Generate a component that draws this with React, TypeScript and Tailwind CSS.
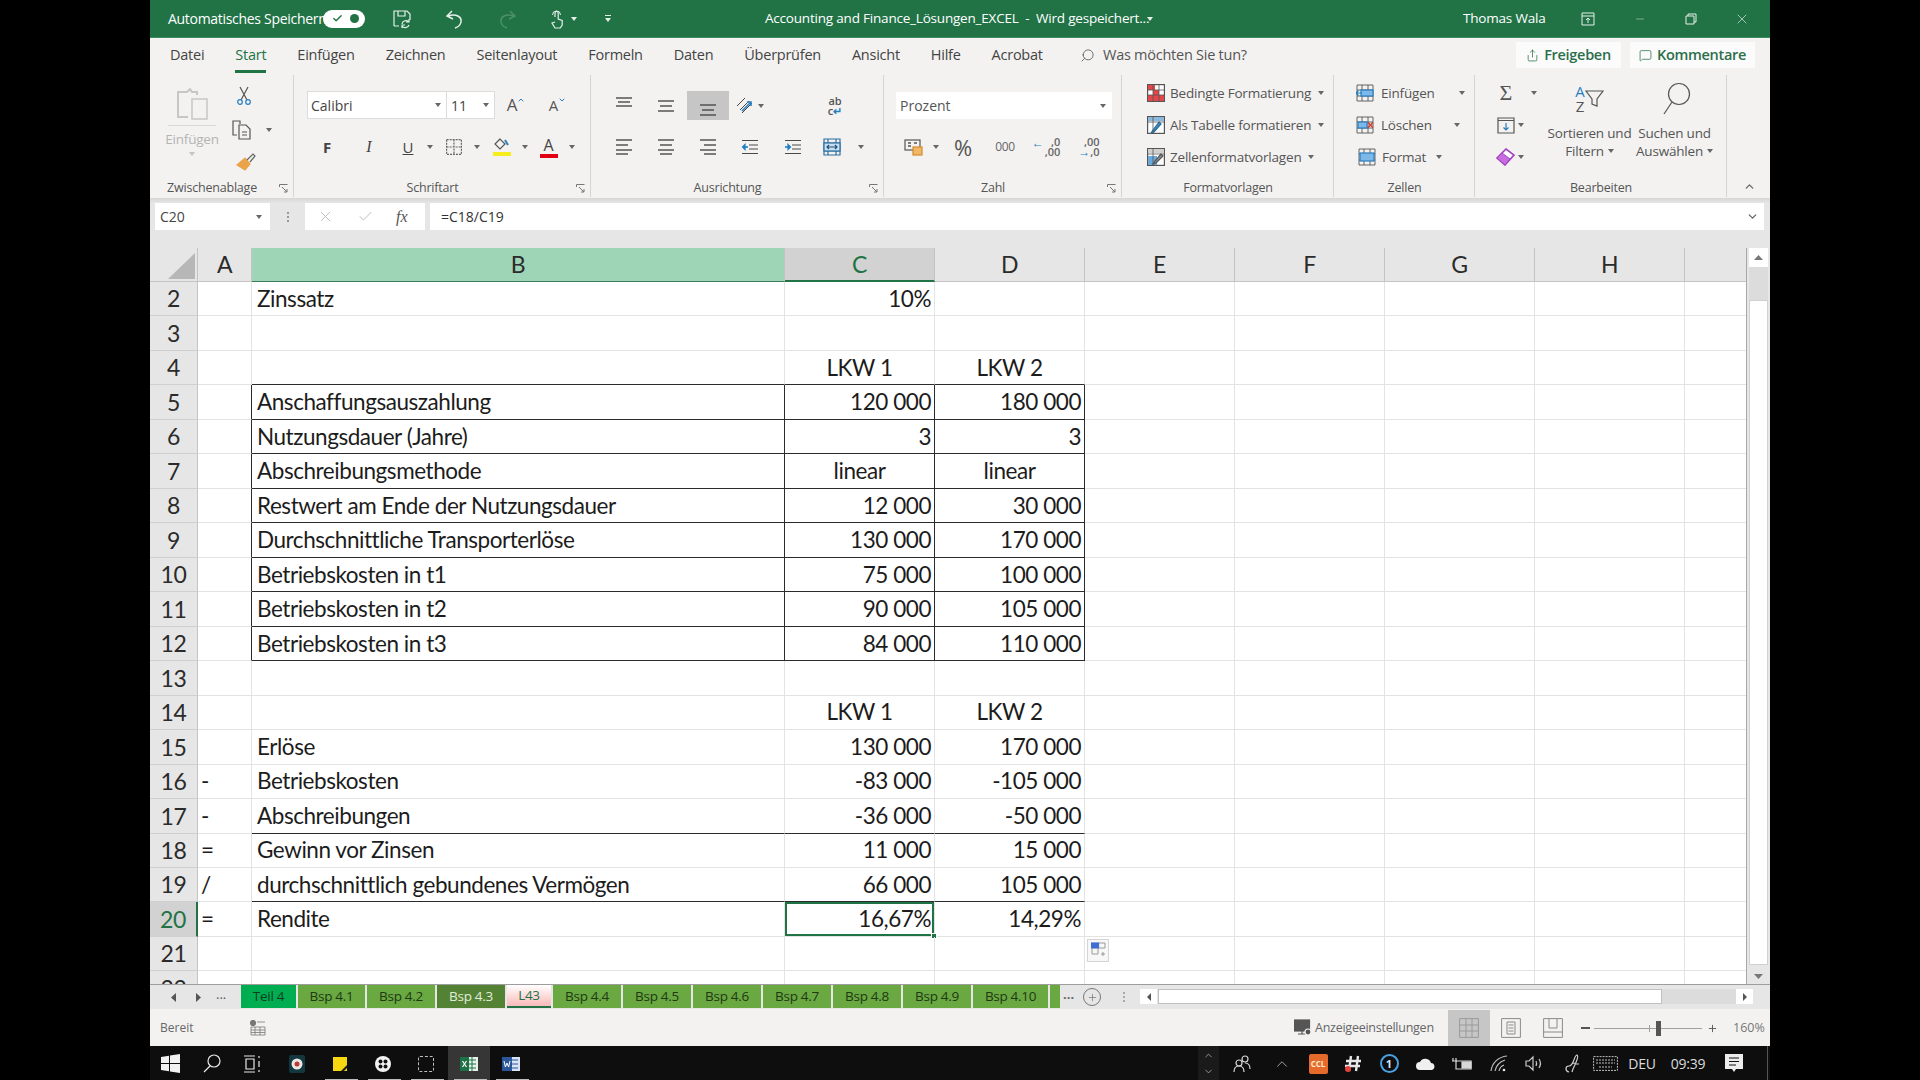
import React from "react";
import clsx from "clsx";
import { Search, Plus, MessageSquare, Share, ChevronUp, ChevronDown, X, Check, Minus } from "lucide-react";

type SvgProps = { w: number; h: number; stroke?: string; className?: string; children: React.ReactNode };

const Svg = ({ w, h, stroke = "#555", className, children }: SvgProps) => (
  <svg width={w} height={h} viewBox={`0 0 ${w} ${h}`} fill="none" stroke={stroke} strokeWidth={1.2} className={clsx("shrink-0", className)}>
    {children}
  </svg>
);

const Caret = ({ color = "#666" }: { color?: string }) => (
  <svg width="6" height="4" viewBox="0 0 6 4" className="shrink-0">
    <path d="M0 0h6L3 4z" fill={color} />
  </svg>
);

const Tool = ({ className, children }: { className: string; children?: React.ReactNode }) => (
  <div className={clsx("flex h-full shrink-0 items-center justify-center", className)}>{children}</div>
);

/* ribbon icons */
const Lines = ({ rows, widths, offset = 0 }: { rows: number[]; widths: [number, number][]; offset?: number }) => (
  <Svg w={18} h={18 + offset} stroke="#4a4a4a">
    {rows.map((y, i) => (
      <path key={y} d={`M${widths[i][0]} ${y + offset}H${widths[i][1]}`} strokeWidth={1.4} />
    ))}
  </Svg>
);

const IndentIcon = ({ inc }: { inc?: boolean }) => (
  <Svg w={18} h={18} stroke="#4a4a4a">
    <path d="M1 2.5h16M8 7h9M8 11h9M1 15.5h16" />
    <path d={inc ? "M1 9h4" : "M3 9h4"} stroke="#1f7fc0" strokeWidth={1.6} />
    <path d={inc ? "M4 6.5 6.5 9 4 11.5z" : "M4 6.5 1.5 9 4 11.5z"} fill="#1f7fc0" stroke="#1f7fc0" />
  </Svg>
);

const TableIcon = ({ kind }: { kind: "cond" | "table" | "style" }) => (
  <Svg w={18} h={18} stroke="#555">
    <rect x="0.6" y="0.6" width="16.8" height="16.8" fill="#fff" />
    {kind === "cond" && (
      <>
        <rect x="1" y="1" width="7" height="5" fill="#e2474a" stroke="none" />
        <rect x="6" y="6" width="6" height="5" fill="#e2474a" stroke="none" />
        <rect x="1" y="11" width="16" height="6" fill="#e2474a" stroke="none" />
      </>
    )}
    {kind === "table" && (
      <>
        <rect x="1" y="1" width="16" height="4" fill="#8cb8dc" stroke="none" />
        <path d="M12 6 6 14l-2 3 3-1 7-8z" fill="#3a8bc7" stroke="#2a6d9e" />
      </>
    )}
    {kind === "style" && (
      <>
        <rect x="1" y="1" width="16" height="4" fill="#cfcfcf" stroke="none" />
        <rect x="1" y="8" width="9" height="9" fill="#6aaadb" stroke="none" />
        <path d="M14 6 8 13l-2 3 3-1 7-7z" fill="#8f8f8f" stroke="#555" />
      </>
    )}
    {kind !== "cond" && <path d="M0.6 6h16.8M6 0.6v16.8" strokeWidth={0.8} />}
    {kind === "cond" && <path d="M0.6 6h16.8M0.6 11h16.8M6 0.6v16.8M12 0.6v16.8" strokeWidth={0.8} />}
  </Svg>
);

const CellIcon = ({ kind }: { kind: "ins" | "del" | "fmt" }) => (
  <Svg w={18} h={18} stroke="#555">
    <path d="M1 1h16v16H1zM1 6h16M1 12h16M6 1v16M12 1v16" strokeWidth={0.9} />
    {kind === "ins" && (
      <>
        <rect x="5" y="6" width="12" height="6" fill="#7db9e8" stroke="#2a7fc0" />
        <path d="M0 9h6M2.5 6.5 0 9l2.5 2.5" stroke="#1f7fc0" />
      </>
    )}
    {kind === "del" && (
      <>
        <rect x="2" y="6" width="9" height="6" fill="#7db9e8" stroke="#2a7fc0" />
        <path d="M12 6.5l5 5M17 6.5l-5 5" stroke="#d63b2f" strokeWidth={1.5} />
      </>
    )}
    {kind === "fmt" && <rect x="2" y="5" width="14" height="8" fill="#7db9e8" stroke="#2a7fc0" />}
  </Svg>
);

const ActionLabel = ({ children, caret }: { children: React.ReactNode; caret?: string }) => (
  <>
    <span className="whitespace-nowrap text-[13.5px] tracking-[-0.2px] text-[#555]">{children}</span>
    {caret && (
      <span className={clsx("flex", caret)}>
        <Caret />
      </span>
    )}
  </>
);

const Launcher = () => (
  <svg width="9" height="9" viewBox="0 0 9 9" fill="none" stroke="#777" className="absolute right-[6px] top-[6px]">
    <path d="M0.5 3V0.5H8.5M3 3l5 5M8 5v3H5" />
  </svg>
);

const Group = ({ width, label, launcher, children }: { width: string; label: string; launcher?: boolean; children: React.ReactNode }) => (
  <div className={clsx("relative flex h-[126px] shrink-0 flex-col", width)}>
    <div className="h-[106px] w-full">{children}</div>
    <div className={clsx("relative flex h-[20px] items-center", launcher && "w-full")}>
      <span className={clsx("w-full text-center text-[12.5px] tracking-[-0.2px] text-[#555]", launcher && "pr-[20px]")}>{label}</span>
      {launcher && <Launcher />}
    </div>
    <div className="absolute bottom-[1px] right-0 top-[3px] w-px bg-[#d4d4d4]" />
  </div>
);

const tabs = ["Datei", "Start", "Einfügen", "Zeichnen", "Seitenlayout", "Formeln", "Daten", "Überprüfen", "Ansicht", "Hilfe", "Acrobat"];

const TitleBar = () => (
  <div className="flex h-[38px] shrink-0 items-center border-b border-[#3f8a60] bg-[#217346] text-white">
    <span className="ml-[18px] w-[155px] whitespace-nowrap text-[14px] tracking-[-0.3px]">Automatisches Speichern</span>
    <div className="flex h-[18px] w-[42px] items-center justify-between rounded-full bg-white pl-[9px] pr-[6px]">
      <Check size={11} strokeWidth={3} color="#217346" />
      <span className="size-[9px] rounded-full bg-[#217346]" />
    </div>
    <Svg w={20} h={20} stroke="#e6f0ea" className="ml-[27px]">
      <path d="M2 17V2h13l3 3v6M2 17h5M6 2v5h7V2" />
      <path d="M10 15a4 4 0 0 1 7-2M17 16a4 4 0 0 1-7 1M17 10v3h-3M10 19v-3h3" />
    </Svg>
    <Svg w={20} h={20} stroke="#e6f0ea" className="ml-[33px]">
      <path d="M7 2 2 7l6 3M3 7c8-3 14 1 13 6-.5 3-3 5-6 6" strokeWidth={1.5} />
    </Svg>
    <Svg w={20} h={20} stroke="#4d8f6a" className="ml-[32px]">
      <path d="M13 2l5 5-6 3M17 7C9 4 3 8 4 13c.5 3 3 5 6 6" strokeWidth={1.5} />
    </Svg>
    <Svg w={16} h={20} stroke="#e6f0ea" className="ml-[32px]">
      <path d="M6 8V4a1.6 1.6 0 0 1 3.2 0v6l4 1.5V16l-2 3H6l-3-5 3-1" />
      <path d="M3.5 6a4 4 0 0 1 8 0" strokeWidth={1} />
    </Svg>
    <span className="ml-[6px]">
      <Caret color="#e6f0ea" />
    </span>
    <span className="ml-[28px] flex flex-col items-center gap-[2px]">
      <span className="h-px w-[6px] bg-[#e6f0ea]" />
      <Caret color="#e6f0ea" />
    </span>
    <span className="ml-[154px] w-[376px] whitespace-nowrap text-[13.5px] tracking-[-0.2px]">Accounting and Finance_Lösungen_EXCEL&nbsp; -&nbsp; Wird gespeichert...</span>
    <span className="ml-[6px]">
      <Caret color="#e6f0ea" />
    </span>
    <span className="ml-[310px] w-[80px] whitespace-nowrap text-[13.5px] tracking-[-0.2px]">Thomas Wala</span>
    <Svg w={14} h={14} stroke="#e6f0ea" className="ml-[38px]">
      <path d="M1 1h12v12H1zM1 4h12M7 11V6M5 8l2-2 2 2" strokeWidth={1} />
    </Svg>
    <Minus size={12} strokeWidth={1} color="#d8e8de" className="ml-[39px]" />
    <Svg w={12} h={12} stroke="#e6f0ea" className="ml-[39px]">
      <path d="M1 3h8v8H1zM3 3V1h8v8H9" strokeWidth={1} />
    </Svg>
    <X size={16} strokeWidth={1} color="#e6f0ea" className="ml-[37px]" />
  </div>
);

const TabRow = () => (
  <div className="flex h-[34px] shrink-0 items-center bg-[#f3f2f1] pl-[20px]">
    <div className="flex w-[910px] shrink-0 gap-[31px]">
      {tabs.map((tab) => (
        <span key={tab} className={clsx("relative whitespace-nowrap text-[14.5px] tracking-[-0.25px]", tab === "Start" ? "text-[#217346]" : "text-[#444]")}>
          {tab}
          {tab === "Start" && <span className="absolute -bottom-[7px] left-0 right-0 h-[3px] bg-[#217346]" />}
        </span>
      ))}
    </div>
    <Search size={15} strokeWidth={1.3} color="#555" className="-scale-x-100" />
    <span className="ml-[8px] w-[413px] whitespace-nowrap text-[14.5px] tracking-[-0.25px] text-[#555]">Was möchten Sie tun?</span>
    <div className="flex h-[26px] w-[105px] items-center justify-center gap-[5px] bg-[#fbfbfb] text-[14.5px] font-semibold tracking-[-0.3px] text-[#2b6f4a]">
      <Share size={13} strokeWidth={1.4} />
      Freigeben
    </div>
    <div className="ml-[9px] flex h-[26px] w-[125px] items-center justify-center gap-[5px] bg-[#fbfbfb] text-[14.5px] font-semibold tracking-[-0.3px] text-[#2b6f4a]">
      <MessageSquare size={13} strokeWidth={1.4} />
      Kommentare
    </div>
  </div>
);

const Ribbon = () => (
  <div className="flex h-[126px] shrink-0 bg-[#f3f2f1]">
    <Group width="w-[144px]" label="Zwischenablage" launcher>
      <div className="flex h-full">
        <div className="ml-[16px] flex w-[52px] flex-col items-center pt-[14px]">
          <Svg w={34} h={34} stroke="#c6c6c6">
            <path d="M22 9V6h-5l-2-3-3 3H3v25h10" strokeWidth={2} />
            <rect x="17" y="13" width="15" height="20" fill="#f3f2f1" strokeWidth={1.5} />
          </Svg>
          <span className="mt-[5px] h-px w-[48px] bg-[#d8d8d8]" />
          <span className="mt-[3px] text-[13.5px] tracking-[-0.2px] text-[#b4b4b4]">Einfügen</span>
          <span className="mt-[3px]">
            <Caret color="#c4c4c4" />
          </span>
        </div>
        <div className="ml-[15px] flex flex-col pt-[12px]">
          <div className="flex h-[24px] w-[22px] items-center justify-center">
            <Svg w={14} h={20}>
              <path d="M3 1l7 13M11 1 4 14" strokeWidth={1.2} />
              <circle cx="3" cy="16" r="2.3" stroke="#2a7fc0" />
              <circle cx="11" cy="16" r="2.3" stroke="#2a7fc0" />
            </Svg>
          </div>
          <div className="mt-[10px] flex h-[24px] items-center">
            <Svg w={20} h={20} className="ml-[-1px]">
              <path d="M8 4V1H1v14h4" />
              <path d="M7 5h7l4 4v10H7zM10 12h5M10 15h5" />
            </Svg>
            <span className="ml-[14px]">
              <Caret />
            </span>
          </div>
          <div className="mt-[8px] flex h-[24px] w-[26px] items-center justify-center">
            <Svg w={20} h={18}>
              <path d="M1 12l8-7 5 6-5 6z" fill="#eba34a" stroke="#eba34a" />
              <path d="M11 7l6-6 2 2-5 6" stroke="#666" />
            </Svg>
          </div>
        </div>
      </div>
    </Group>

    <Group width="w-[297px]" label="Schriftart" launcher>
      <div className="ml-[13px] mt-[19px] flex h-[28px]">
        <div className="flex w-[140px] items-center justify-between border border-[#dcdcdc] bg-white pl-[3px] pr-[5px] text-[14px] text-[#444]">
          Calibri
          <Caret />
        </div>
        <div className="flex w-[48px] items-center justify-between border border-l-0 border-[#dcdcdc] bg-white pl-[4px] pr-[5px] text-[14px] text-[#444]">
          11
          <Caret />
        </div>
        <Tool className="w-[42px]">
          <span className="text-[17px] text-[#555]">A</span>
          <ChevronUp size={8} strokeWidth={3} color="#2a7fc0" className="mb-[10px]" />
        </Tool>
        <Tool className="w-[41px]">
          <span className="text-[15px] text-[#555]">A</span>
          <ChevronDown size={8} strokeWidth={3} color="#2a7fc0" className="mb-[10px]" />
        </Tool>
      </div>
      <div className="ml-[13px] mt-[14px] flex h-[28px]">
        <Tool className="w-[40px] text-[15px] font-bold text-[#444]">F</Tool>
        <Tool className="w-[44px] font-['Liberation_Serif',serif] text-[16px] italic text-[#444]">I</Tool>
        <Tool className="w-[34px] text-[15px] text-[#444] underline">U</Tool>
        <Tool className="w-[10px]">
          <Caret />
        </Tool>
        <Tool className="w-[37px]">
          <Svg w={16} h={16} stroke="#666">
            <path d="M.6.6h14.8v14.8H.6zM8 .6v14.8M.6 8h14.8" strokeDasharray="2 1" />
          </Svg>
        </Tool>
        <Tool className="w-[10px]">
          <Caret />
        </Tool>
        <Tool className="w-[40px] flex-col">
          <Svg w={18} h={13}>
            <path d="M7 1 2 6l5 5 5-5z" />
            <path d="M12 2l3 5" stroke="#2a7fc0" strokeWidth={2} />
          </Svg>
          <span className="mt-[1px] h-[4px] w-[18px] bg-[#f5ee1c]" />
        </Tool>
        <Tool className="w-[6px]">
          <Caret />
        </Tool>
        <Tool className="w-[41px] flex-col text-[16px] leading-[17px] text-[#444]">
          A<span className="h-[4px] w-[18px] bg-[#e1000f]" />
        </Tool>
        <Tool className="w-[6px]">
          <Caret />
        </Tool>
      </div>
    </Group>

    <Group width="w-[293px]" label="Ausrichtung" launcher>
      <div className="ml-[12px] mt-[19px] flex h-[29px]">
        <Tool className="w-[42px] pb-[4px]">
          <Lines rows={[3, 7, 11]} widths={[[1, 17], [3, 15], [1, 17]]} />
        </Tool>
        <Tool className="w-[42px]">
          <Lines rows={[4, 9, 14]} widths={[[1, 17], [3, 15], [1, 17]]} />
        </Tool>
        <Tool className="w-[42px] bg-[#c6c6c6] pt-[4px]">
          <Lines rows={[6, 11, 16]} widths={[[1, 17], [3, 15], [1, 17]]} />
        </Tool>
        <Tool className="w-[42px] gap-[3px]">
          <Svg w={19} h={18}>
            <path d="M1 9 9 1M4 13l9-9M6 16 16 6" stroke="#444" strokeWidth={1} />
            <path d="M6 14 14 6M11 5h4v4" stroke="#2a7fc0" strokeWidth={1.6} />
          </Svg>
          <Caret />
        </Tool>
        <Tool className="ml-[43px] w-[42px]">
          <span className="text-center text-[11px] font-semibold leading-[10px] text-[#555]">
            ab
            <br />
            c<span className="text-[#2a7fc0]">↵</span>
          </span>
        </Tool>
      </div>
      <div className="ml-[12px] mt-[13px] flex h-[28px]">
        <Tool className="w-[42px]">
          <Lines rows={[2, 7, 12, 16]} widths={[[1, 17], [1, 13], [1, 17], [1, 13]]} />
        </Tool>
        <Tool className="w-[42px]">
          <Lines rows={[2, 7, 12, 16]} widths={[[1, 17], [3, 15], [1, 17], [3, 15]]} />
        </Tool>
        <Tool className="w-[42px]">
          <Lines rows={[2, 7, 12, 16]} widths={[[1, 17], [5, 17], [1, 17], [5, 17]]} />
        </Tool>
        <Tool className="w-[42px]">
          <IndentIcon />
        </Tool>
        <Tool className="w-[43px]">
          <IndentIcon inc />
        </Tool>
        <Tool className="w-[36px]">
          <Svg w={18} h={18} stroke="#2f6f9e">
            <path d="M1 1h16v16H1zM1 5h16M1 13h16M5 1v4M13 1v4M5 13v4M13 13v4" />
            <rect x="1" y="5" width="16" height="8" fill="#c5e0f5" />
            <path d="M4 9h10M6 7 4 9l2 2M12 7l2 2-2 2" stroke="#234f73" />
          </Svg>
        </Tool>
        <Tool className="w-[16px] pl-[6px]">
          <Caret />
        </Tool>
      </div>
    </Group>

    <Group width="w-[238px]" label="Zahl" launcher>
      <div className="ml-[12px] mt-[20px] flex h-[27px] w-[216px] items-center justify-between bg-white pl-[4px] pr-[6px] text-[14px] text-[#555]">
        Prozent
        <Caret />
      </div>
      <div className="ml-[12px] mt-[14px] flex h-[28px]">
        <Tool className="w-[36px]">
          <Svg w={20} h={18}>
            <rect x="1" y="2" width="15" height="10" />
            <path d="M4 5h3M4 8h3M10 5h3" strokeWidth={1.3} />
            <rect x="9" y="9" width="9" height="8" fill="#f2b766" stroke="#d58a2c" />
          </Svg>
        </Tool>
        <Tool className="w-[8px]">
          <Caret />
        </Tool>
        <Tool className="w-[46px] text-[22px] leading-none text-[#555]">%</Tool>
        <Tool className="w-[38px] text-[12px] tracking-[-0.4px] text-[#666]">000</Tool>
        <Tool className="w-[44px]">
          <span className="flex items-center text-[11px] font-semibold leading-[10px] text-[#666]">
            <span className="mb-[9px] mr-px text-[12px] text-[#2a7fc0]">←</span>
            <span className="text-right">
              ,0
              <br />
              ,00
            </span>
          </span>
        </Tool>
        <Tool className="w-[42px]">
          <span className="flex items-center text-[11px] font-semibold leading-[10px] text-[#666]">
            <span className="text-right">
              ,00
              <br />
              <span className="text-[12px] text-[#2a7fc0]">→</span>,0
            </span>
          </span>
        </Tool>
      </div>
    </Group>

    <Group width="w-[212px]" label="Formatvorlagen">
      <div className="flex flex-col pl-[25px] pt-[5px]">
        <div className="flex h-[32px] items-center gap-[5px]">
          <TableIcon kind="cond" />
          <ActionLabel caret="ml-[2px]">Bedingte Formatierung</ActionLabel>
        </div>
        <div className="flex h-[32px] items-center gap-[5px]">
          <TableIcon kind="table" />
          <ActionLabel caret="ml-[2px]">Als Tabelle formatieren</ActionLabel>
        </div>
        <div className="flex h-[32px] items-center gap-[5px]">
          <TableIcon kind="style" />
          <ActionLabel caret="ml-[2px]">Zellenformatvorlagen</ActionLabel>
        </div>
      </div>
    </Group>

    <Group width="w-[141px]" label="Zellen">
      <div className="flex flex-col pl-[22px] pt-[5px]">
        <div className="flex h-[32px] items-center gap-[7px]">
          <CellIcon kind="ins" />
          <ActionLabel caret="ml-[17px]">Einfügen</ActionLabel>
        </div>
        <div className="flex h-[32px] items-center gap-[7px]">
          <CellIcon kind="del" />
          <ActionLabel caret="ml-[15px]">Löschen</ActionLabel>
        </div>
        <div className="ml-[2px] flex h-[32px] items-center gap-[6px]">
          <CellIcon kind="fmt" />
          <ActionLabel caret="ml-[4px]">Format</ActionLabel>
        </div>
      </div>
    </Group>

    <Group width="w-[252px]" label="Bearbeiten">
      <div className="flex h-full">
        <div className="ml-[20px] flex w-[52px] flex-col pt-[5px]">
          <div className="flex h-[32px] items-center">
            <span className="w-[22px] text-center font-['Liberation_Serif',serif] text-[22px] leading-none text-[#555]">Σ</span>
            <span className="ml-[14px]">
              <Caret />
            </span>
          </div>
          <div className="flex h-[32px] items-center">
            <Svg w={18} h={17} className="ml-[2px]">
              <path d="M1 1h16v15H1zM1 3.5h16" />
              <path d="M9 6v7M6.5 10.5 9 13l2.5-2.5" stroke="#2a7fc0" />
            </Svg>
            <span className="ml-[3px]">
              <Caret />
            </span>
          </div>
          <div className="flex h-[32px] items-center">
            <Svg w={20} h={18} stroke="#a43fc4" className="ml-[1px]">
              <path d="M1 10l9-9 8 6-9 10z" fill="#fff" strokeWidth={1.6} />
              <path d="M1 10l5-5 8 6-5 6z" fill="#c86ddd" strokeWidth={1} />
            </Svg>
            <span className="ml-[2px]">
              <Caret />
            </span>
          </div>
        </div>
        <div className="flex w-[85px] flex-col items-center">
          <div className="mt-[8px] flex h-[38px] items-center">
            <span className="flex flex-col items-center text-[15px] leading-[15px]">
              <span className="text-[#2a7fc0]">A</span>
              <span className="text-[#555]">Z</span>
            </span>
            <Svg w={19} h={20} className="mb-[2px]">
              <path d="M1 3h17l-6 8v7l-5-2v-5z" />
            </Svg>
          </div>
          <span className="mt-[6px] whitespace-nowrap text-[13.5px] leading-[18px] tracking-[-0.2px] text-[#555]">Sortieren und</span>
          <span className="flex items-center gap-[4px] text-[13.5px] leading-[18px] tracking-[-0.2px] text-[#555]">
            Filtern
            <Caret />
          </span>
        </div>
        <div className="flex w-[85px] flex-col items-center">
          <div className="mt-[8px] flex h-[38px] items-center">
            <Svg w={32} h={34}>
              <circle cx="20" cy="12" r="10.5" />
              <path d="M13 20 5 32" />
            </Svg>
          </div>
          <span className="mt-[6px] whitespace-nowrap text-[13.5px] leading-[18px] tracking-[-0.2px] text-[#555]">Suchen und</span>
          <span className="flex items-center gap-[4px] text-[13.5px] leading-[18px] tracking-[-0.2px] text-[#555]">
            Auswählen
            <Caret />
          </span>
        </div>
      </div>
    </Group>

    <div className="flex flex-1 items-end justify-end pb-[5px] pr-[14px]">
      <ChevronUp size={13} strokeWidth={2.4} color="#666" />
    </div>
  </div>
);

const FormulaBar = () => (
  <div className="flex h-[50px] shrink-0 flex-col bg-[#e6e6e6]">
    <div className="h-[5px] bg-gradient-to-b from-[#d6d6d6] to-[#e6e6e6]" />
    <div className="flex h-[27px] items-stretch pl-[5px] pr-[6px] pt-0">
      <div className="flex w-[115px] items-center justify-between bg-white pl-[5px] pr-[8px] text-[14px] text-[#444]">
        C20
        <Caret />
      </div>
      <div className="flex w-[35px] flex-col items-center justify-center gap-[2px]">
        <span className="size-[2px] bg-[#999]" />
        <span className="size-[2px] bg-[#999]" />
        <span className="size-[2px] bg-[#999]" />
      </div>
      <div className="flex w-[120px] items-center bg-white pl-[12px] pr-[8px]">
        <X size={17} strokeWidth={1.4} color="#bdbdbd" />
        <Check size={17} strokeWidth={1.4} color="#bdbdbd" className="ml-[23px]" />
        <span className="ml-[22px] font-['Liberation_Serif',serif] text-[16px] italic text-[#555]">fx</span>
      </div>
      <div className="ml-[5px] flex flex-1 items-center justify-between bg-white pl-[11px] pr-[5px] text-[14px] text-[#333]">
        =C18/C19
        <ChevronDown size={13} strokeWidth={2.4} color="#666" />
      </div>
    </div>
  </div>
);

const headTint = "border-r border-b border-[#c4c4c4]";
const HeadCell = ({ label, className }: { label: string; className: string }) => (
  <div className={clsx("flex h-full shrink-0 items-center justify-center text-[23px]", headTint, className)}>{label}</div>
);

const SheetHeader = () => (
  <div className="flex h-[34px] shrink-0 bg-[#e6e6e6] font-['Lato',sans-serif] text-[#2b2b2b]">
    <div className="relative flex h-full w-[48px] shrink-0 items-end justify-end border-b border-r border-[#c4c4c4] pb-[2px] pr-[2px]">
      <svg width="27" height="26" viewBox="0 0 27 26">
        <path d="M27 0v26H0z" fill="#b7b7b7" />
      </svg>
    </div>
    <HeadCell label="A" className="w-[54px]" />
    <HeadCell label="B" className="w-[533px] border-b-[#3f7d5b] bg-[#9fd5b7]" />
    <HeadCell label="C" className="w-[150px] border-b-2 border-b-[#217346] bg-[#d2d2d2] text-[#217346]" />
    <HeadCell label="D" className="w-[150px]" />
    <HeadCell label="E" className="w-[150px]" />
    <HeadCell label="F" className="w-[150px]" />
    <HeadCell label="G" className="w-[150px]" />
    <HeadCell label="H" className="w-[150px]" />
    <div className="flex-1 border-b border-[#c4c4c4]" />
  </div>
);

type Row = { n: number; a?: string; b?: string; c?: string; d?: string; center?: boolean; box?: boolean; line?: boolean };

const rows: Row[] = [
  { n: 2, b: "Zinssatz", c: "10%" },
  { n: 3 },
  { n: 4, c: "LKW 1", d: "LKW 2", center: true, line: true },
  { n: 5, b: "Anschaffungsauszahlung", c: "120 000", d: "180 000", box: true, line: true },
  { n: 6, b: "Nutzungsdauer (Jahre)", c: "3", d: "3", box: true, line: true },
  { n: 7, b: "Abschreibungsmethode", c: "linear", d: "linear", center: true, box: true, line: true },
  { n: 8, b: "Restwert am Ende der Nutzungsdauer", c: "12 000", d: "30 000", box: true, line: true },
  { n: 9, b: "Durchschnittliche Transporterlöse", c: "130 000", d: "170 000", box: true, line: true },
  { n: 10, b: "Betriebskosten in t1", c: "75 000", d: "100 000", box: true, line: true },
  { n: 11, b: "Betriebskosten in t2", c: "90 000", d: "105 000", box: true, line: true },
  { n: 12, b: "Betriebskosten in t3", c: "84 000", d: "110 000", box: true, line: true },
  { n: 13 },
  { n: 14, c: "LKW 1", d: "LKW 2", center: true },
  { n: 15, b: "Erlöse", c: "130 000", d: "170 000" },
  { n: 16, a: "-", b: "Betriebskosten", c: "-83 000", d: "-105 000" },
  { n: 17, a: "-", b: "Abschreibungen", c: "-36 000", d: "-50 000", line: true },
  { n: 18, a: "=", b: "Gewinn vor Zinsen", c: "11 000", d: "15 000" },
  { n: 19, a: "/", b: "durchschnittlich gebundenes Vermögen", c: "66 000", d: "105 000", line: true },
  { n: 20, a: "=", b: "Rendite", c: "16,67%", d: "14,29%" },
  { n: 21 },
  { n: 22 },
];

const cellBase = "flex h-full shrink-0 items-center whitespace-nowrap border-b border-r border-[#e3e3e3]";

const SheetRow = ({ row }: { row: Row }) => {
  const selected = row.n === 20;
  const lineCls = row.line ? "border-b-[#2b2b2b]" : "";
  const boxCls = row.box ? "border-r-[#2b2b2b]" : "";
  const numCls = row.center ? "justify-center" : "justify-end pr-[3px]";
  return (
    <div className="flex h-[34.47px] shrink-0">
      <div
        className={clsx(
          "flex h-full w-[48px] shrink-0 items-center justify-center border-b border-[#cfcfcf] text-[23px]",
          selected ? "border-r-2 border-r-[#217346] bg-[#d2d2d2] text-[#217346]" : "border-r border-r-[#c4c4c4] bg-[#e6e6e6] text-[#2b2b2b]",
        )}
      >
        {row.n}
      </div>
      <div className={clsx(cellBase, "w-[54px] pl-[3px]", boxCls)}>{row.a}</div>
      <div className={clsx(cellBase, "w-[533px] pl-[5px]", lineCls, boxCls)}>{row.b}</div>
      <div className={clsx(cellBase, "relative w-[150px]", numCls, lineCls, boxCls, selected && "shadow-[inset_0_0_0_2px_#217346]")}>
        {row.c}
        {selected && <span className="absolute -bottom-[3px] -right-[3px] size-[6px] border border-white bg-[#217346]" />}
      </div>
      <div className={clsx(cellBase, "w-[150px]", numCls, lineCls, boxCls)}>{row.d}</div>
      <div className={clsx(cellBase, "relative w-[150px]")}>
        {row.n === 21 && (
          <div className="absolute left-[2px] top-[2px] flex h-[23px] w-[22px] flex-col justify-center border border-[#d5d5d5] bg-[#f7f7f7] px-[3px]">
            <Svg w={15} h={16} stroke="#9a9a9a">
              <rect x="0.5" y="1" width="7" height="5" fill="#3f6fd1" stroke="#3f6fd1" />
              <path d="M8 1h6v5H8M1 6v6h6V6M10 12h4M12 10v4" strokeWidth={1} />
            </Svg>
          </div>
        )}
      </div>
      <div className={clsx(cellBase, "w-[150px]")} />
      <div className={clsx(cellBase, "w-[150px]")} />
      <div className={clsx(cellBase, "w-[150px]")} />
      <div className="flex-1 border-b border-[#e3e3e3]" />
    </div>
  );
};

const VScrollbar = () => (
  <div className="flex w-[23px] shrink-0 flex-col bg-[#e6e6e6] pl-[2px] pr-[2px]">
    <div className="flex h-[19px] shrink-0 items-center justify-center bg-white">
      <svg width="9" height="5" viewBox="0 0 9 5">
        <path d="M0 5h9L4.5 0z" fill="#777" />
      </svg>
    </div>
    <div className="h-[33px] shrink-0 bg-[#dcdcdc]" />
    <div className="flex-1 border border-[#d0d0d0] bg-white" />
    <div className="mt-[3px] flex h-[16px] shrink-0 items-center justify-center">
      <svg width="9" height="5" viewBox="0 0 9 5">
        <path d="M0 0h9L4.5 5z" fill="#777" />
      </svg>
    </div>
  </div>
);

const Sheet = () => (
  <div className="flex h-[736px] shrink-0 bg-[#e6e6e6]">
    <div className="flex w-[1597px] shrink-0 flex-col overflow-hidden border-r border-[#a8a8a8] bg-white font-['Lato',sans-serif] text-[22.5px] tracking-[-0.45px] text-[#1c1c1c]">
      <SheetHeader />
      {rows.map((row) => (
        <SheetRow key={row.n} row={row} />
      ))}
    </div>
    <VScrollbar />
  </div>
);

type SheetTab = { label: string; width: string; tone: "green" | "bright" | "dark" | "active" };

const sheetTabs: SheetTab[] = [
  { label: "Teil 4", width: "w-[55px]", tone: "bright" },
  { label: "Bsp 4.1", width: "w-[67px]", tone: "green" },
  { label: "Bsp 4.2", width: "w-[68px]", tone: "green" },
  { label: "Bsp 4.3", width: "w-[68px]", tone: "dark" },
  { label: "L43", width: "w-[44px]", tone: "active" },
  { label: "Bsp 4.4", width: "w-[68px]", tone: "green" },
  { label: "Bsp 4.5", width: "w-[68px]", tone: "green" },
  { label: "Bsp 4.6", width: "w-[68px]", tone: "green" },
  { label: "Bsp 4.7", width: "w-[68px]", tone: "green" },
  { label: "Bsp 4.8", width: "w-[68px]", tone: "green" },
  { label: "Bsp 4.9", width: "w-[68px]", tone: "green" },
  { label: "Bsp 4.10", width: "w-[75px]", tone: "green" },
];

const SheetTabs = () => (
  <div className="flex h-[25px] shrink-0 border-t border-[#9d9d9d] bg-[#e6e6e6]">
    <div className="flex w-[91px] shrink-0 items-center pl-[21px] text-[#555]">
      <svg width="5" height="9" viewBox="0 0 5 9">
        <path d="M5 0v9L0 4.5z" fill="#555" />
      </svg>
      <svg width="5" height="9" viewBox="0 0 5 9" className="ml-[20px]">
        <path d="M0 0v9l5-4.5z" fill="#555" />
      </svg>
      <span className="ml-[15px] pb-[4px] text-[13px]">...</span>
    </div>
    <div className="flex w-[816px] shrink-0 gap-[2px]">
      {sheetTabs.map((tab) => (
        <div
          key={tab.label}
          className={clsx(
            "flex h-[23px] shrink-0 items-center justify-center text-[13.5px] tracking-[-0.3px]",
            tab.width,
            tab.tone === "green" && "bg-[#6aa842] text-[#1d3a12]",
            tab.tone === "bright" && "bg-[#00ad50] text-[#0f3d22]",
            tab.tone === "dark" && "bg-[#548235] text-[#e2edd9]",
            tab.tone === "active" && "border-b-2 border-[#217346] bg-gradient-to-b from-white to-[#f8b9b9] text-[#217346]",
          )}
        >
          {tab.label}
        </div>
      ))}
      <div className="h-[23px] w-[10px] shrink-0 bg-[#6aa842]" />
    </div>
    <span className="ml-[6px] w-[20px] shrink-0 pb-[4px] text-[13px] font-bold text-[#666]">...</span>
    <div className="mt-[3px] flex size-[18px] shrink-0 items-center justify-center rounded-full border border-[#777]">
      <Plus size={11} strokeWidth={1.2} color="#555" />
    </div>
    <div className="ml-[15px] flex w-[16px] shrink-0 flex-col items-center justify-center gap-[2px]">
      <span className="size-[2px] bg-[#aaa]" />
      <span className="size-[2px] bg-[#aaa]" />
      <span className="size-[2px] bg-[#aaa]" />
    </div>
    <div className="ml-[8px] mt-[4px] flex h-[15px] w-[17px] shrink-0 items-center justify-center bg-white">
      <svg width="4" height="8" viewBox="0 0 4 8">
        <path d="M4 0v8L0 4z" fill="#555" />
      </svg>
    </div>
    <div className="ml-px mt-[4px] h-[15px] w-[504px] shrink-0 border border-[#c0c0c0] bg-white" />
    <div className="mt-[4px] h-[15px] w-[74px] shrink-0 bg-[#dcdcdc]" />
    <div className="mt-[4px] flex h-[15px] w-[17px] shrink-0 items-center justify-center bg-white">
      <svg width="4" height="8" viewBox="0 0 4 8">
        <path d="M0 0v8l4-4z" fill="#555" />
      </svg>
    </div>
  </div>
);

const StatusBar = () => (
  <div className="flex h-[37px] shrink-0 items-stretch border-t border-[#f2f2f2] bg-[#f3f2f1] text-[#666]">
    <span className="ml-[10px] flex w-[90px] items-center text-[12px]">Bereit</span>
    <div className="flex items-center">
      <Svg w={16} h={16} stroke="#777">
        <circle cx="3" cy="3" r="2.5" fill="#777" />
        <path d="M7 2h8M1 7h14v8H1zM1 10h14M1 12.5h14M5 7v8M10 7v8" strokeWidth={0.8} />
      </Svg>
    </div>
    <div className="ml-[1028px] flex w-[154px] items-center">
      <Svg w={18} h={18} stroke="#555">
        <rect x="0.5" y="1" width="15" height="11" fill="#555" />
        <path d="M8 12v3M4 15h8" />
        <circle cx="14" cy="13" r="3" fill="#555" stroke="#f3f2f1" />
      </Svg>
      <span className="ml-[3px] whitespace-nowrap text-[12.5px] tracking-[-0.25px]">Anzeigeeinstellungen</span>
    </div>
    <div className="flex w-[42px] items-center justify-center bg-[#c6c6c6]">
      <Svg w={20} h={20} stroke="#9a9a9a">
        <path d="M.6.6h18.8v18.8H.6zM7 .6v18.8M13 .6v18.8M.6 7h18.8M.6 13h18.8" strokeWidth={1} />
      </Svg>
    </div>
    <div className="flex w-[41px] items-center justify-center">
      <Svg w={20} h={20} stroke="#8a8a8a">
        <path d="M.6.6h18.8v18.8H.6zM6 4h8v12H6zM7.5 7h5M7.5 10h5M7.5 13h5" strokeWidth={1} />
      </Svg>
    </div>
    <div className="flex w-[44px] items-center justify-center">
      <Svg w={20} h={20} stroke="#8a8a8a">
        <path d="M.6.6h18.8v18.8H.6zM6 .6V10h8V.6M.6 14h18.8" strokeWidth={1} />
      </Svg>
    </div>
    <div className="flex w-[146px] items-center">
      <span className="ml-[6px] h-[2px] w-[9px] bg-[#555]" />
      <div className="relative ml-[4px] h-px w-[108px] bg-[#a0a0a0]">
        <span className="absolute left-[55px] top-[-3px] h-[7px] w-px bg-[#a0a0a0]" />
        <span className="absolute left-[62px] top-[-7px] h-[15px] w-[5px] bg-[#555]" />
      </div>
      <Plus size={11} strokeWidth={2} color="#555" className="ml-[5px]" />
    </div>
    <span className="flex items-center pl-[12px] text-[12.5px] text-[#777]">160%</span>
  </div>
);

const launchApps = [
  { key: "start", cell: "w-[41px]", bar: false },
  { key: "search", cell: "w-[41px]", bar: false },
  { key: "view", cell: "w-[42px]", bar: false },
  { key: "browser", cell: "ml-[2px] w-[42px]", bar: false },
  { key: "notes", cell: "ml-[1px] w-[42px]", bar: true },
  { key: "circle", cell: "ml-[1px] w-[42px]", bar: true },
  { key: "snip", cell: "ml-[1px] w-[42px]", bar: true },
  { key: "excel", cell: "ml-px w-[42px] bg-[#363636]", bar: true },
  { key: "word", cell: "w-[42px]", bar: true },
];

const AppIcon = ({ name }: { name: string }) => {
  switch (name) {
    case "start":
      return (
        <svg width="19" height="19" viewBox="0 0 19 19" fill="#f2f2f2">
          <path d="M0 3l8-1.2V9H0zM9 1.6 19 0v9H9zM0 10h8v7.2L0 16zM9 10h10v9L9 17.4z" />
        </svg>
      );
    case "search":
      return (
        <Svg w={18} h={19} stroke="#e8e8e8">
          <circle cx="11" cy="7" r="6" />
          <path d="M7 12 1 18" />
        </Svg>
      );
    case "view":
      return (
        <Svg w={18} h={18} stroke="#e8e8e8">
          <path d="M0 1h11M0 17h11M2 4h8v10H2zM15 1v2M15 6v6M15 15v2" />
        </Svg>
      );
    case "browser":
      return (
        <svg width="16" height="18" viewBox="0 0 16 18">
          <rect width="16" height="18" rx="2" fill="#12373c" />
          <circle cx="8" cy="9" r="5.5" fill="#e8e8e8" />
          <circle cx="8" cy="9" r="2.5" fill="#c0392b" />
        </svg>
      );
    case "notes":
      return (
        <svg width="14" height="14" viewBox="0 0 14 14">
          <path d="M0 0h14v14H0z" fill="#f8d90f" />
          <path d="M8 14l6-6v3l-3 3z" fill="#222" />
        </svg>
      );
    case "circle":
      return (
        <svg width="16" height="16" viewBox="0 0 16 16">
          <circle cx="8" cy="8" r="8" fill="#f2f2f2" />
          <circle cx="5.5" cy="5.5" r="2" fill="#111" />
          <circle cx="10.5" cy="5.5" r="2" fill="#111" />
          <circle cx="5.5" cy="10.5" r="2" fill="#111" />
          <circle cx="10.5" cy="10.5" r="2" fill="#111" />
        </svg>
      );
    case "snip":
      return <span className="size-[16px] rounded-[2px] border border-dashed border-[#bdbdbd]" />;
    case "excel":
      return (
        <svg width="18" height="16" viewBox="0 0 18 16">
          <path d="M6 1h12v14H6z" fill="#e6f0ea" />
          <path d="M8 4h8M8 8h8M8 12h8M12 1v14" stroke="#217346" />
          <path d="M0 1h9v14H0z" fill="#1e7145" />
          <path d="M2.5 5l4 6M6.5 5l-4 6" stroke="#fff" strokeWidth={1.2} />
        </svg>
      );
    default:
      return (
        <svg width="18" height="16" viewBox="0 0 18 16">
          <path d="M6 1h12v14H6z" fill="#d8e3f5" />
          <path d="M9 4h7M9 8h7M9 12h7" stroke="#2b579a" />
          <path d="M0 1h10v14H0z" fill="#2b579a" />
          <path d="M2 5l1.4 6L5 7l1.6 4L8 5" stroke="#fff" strokeWidth={1} fill="none" />
        </svg>
      );
  }
};

const TrayCell = ({ className, children }: { className: string; children: React.ReactNode }) => (
  <div className={clsx("flex h-full shrink-0 items-center justify-center", className)}>{children}</div>
);

const Taskbar = () => (
  <div className="flex h-[35px] shrink-0 bg-[#0e0e0e] text-[#dcdcdc]">
    {launchApps.map((app) => (
      <div key={app.key} className={clsx("relative flex h-full shrink-0 items-center justify-center", app.cell)}>
        <AppIcon name={app.key} />
        {app.bar && <span className="absolute bottom-0 left-[6px] right-[3px] h-[2px] bg-[#bdbdbd]" />}
      </div>
    ))}
    <div className="ml-[666px] flex w-[21px] shrink-0 flex-col items-center justify-center gap-[5px] bg-[#1a1a1a]">
      <ChevronUp size={11} strokeWidth={1.6} color="#bdbdbd" />
      <ChevronDown size={11} strokeWidth={1.6} color="#bdbdbd" />
    </div>
    <TrayCell className="w-[46px]">
      <Svg w={19} h={19} stroke="#d8d8d8">
        <circle cx="12" cy="5" r="3" />
        <circle cx="6" cy="9" r="3" />
        <path d="M1 18c0-4 2-6 5-6s5 2 5 6M12 9c3 0 5 2 5 6" />
      </Svg>
    </TrayCell>
    <TrayCell className="w-[34px]">
      <ChevronUp size={18} strokeWidth={1} color="#cfcfcf" />
    </TrayCell>
    <TrayCell className="w-[38px]">
      <div className="flex h-[20px] w-[19px] items-center justify-center rounded-[2px] bg-[#e56a2c] text-[8px] font-bold text-[#ffe9c9]">CCL</div>
    </TrayCell>
    <TrayCell className="w-[33px]">
      <Svg w={17} h={17} stroke="#e8e8e8">
        <path d="M6 1 4 16M13 1l-2 15M1 6h15M0 11h15" strokeWidth={2.4} />
        <circle cx="3" cy="14" r="3" fill="#e3413b" stroke="none" />
      </Svg>
    </TrayCell>
    <TrayCell className="w-[38px]">
      <div className="flex size-[19px] items-center justify-center rounded-full border-[2px] border-[#4aa3e0] text-[11px] font-bold leading-none text-[#cfe8f9]">1</div>
    </TrayCell>
    <TrayCell className="w-[35px]">
      <svg width="20" height="12" viewBox="0 0 20 12">
        <path d="M4 12a4 4 0 0 1 0-8 6 6 0 0 1 11 1 3.6 3.6 0 0 1 1 7z" fill="#f0f0f0" />
      </svg>
    </TrayCell>
    <TrayCell className="w-[38px]">
      <Svg w={20} h={14} stroke="#d8d8d8">
        <path d="M4 4h15v8H4z" />
        <rect x="10" y="5" width="9" height="6" fill="#d8d8d8" />
        <path d="M1 1v3M4 1v3M0 4h5" />
      </Svg>
    </TrayCell>
    <TrayCell className="w-[35px]">
      <Svg w={18} h={17} stroke="#b8b8b8">
        <path d="M1 16C2 8 8 2 17 1M5 16c1-5 4-9 10-11M9 16c.6-3 2.4-5 5-6" />
        <circle cx="14" cy="15" r="1.3" fill="#e8e8e8" stroke="none" />
      </Svg>
    </TrayCell>
    <TrayCell className="w-[35px]">
      <Svg w={18} h={17} stroke="#c8c8c8">
        <path d="M1 6h3l4-4v13l-4-4H1zM11 6c1 2 1 3 0 5M14 4c2 3 2 6 0 9" />
      </Svg>
    </TrayCell>
    <TrayCell className="w-[37px] pl-[4px]">
      <Svg w={16} h={19} stroke="#d0d0d0">
        <path d="M5 18c-4-1-4-6 0-6 5 0 5-11 8-11 2 1-1 8-4 14l-1 3M9 9l6 1" />
      </Svg>
    </TrayCell>
    <TrayCell className="w-[34px]">
      <Svg w={25} h={15} stroke="#bdbdbd">
        <path d="M.6.6h23.8v13.8H.6zM3 4h19M3 7h19M6 11h13" strokeWidth={1} strokeDasharray="2 1" />
      </Svg>
    </TrayCell>
    <TrayCell className="w-[40px] text-[14px] tracking-[-0.2px]">DEU</TrayCell>
    <TrayCell className="w-[52px] text-[14px] tracking-[-0.2px]">09:39</TrayCell>
    <TrayCell className="w-[40px]">
      <svg width="18" height="19" viewBox="0 0 18 19">
        <path d="M0 0h18v15h-7l-2 3-2-3H0z" fill="#ededed" />
        <path d="M4 4h10M4 7.5h10M4 11h7" stroke="#111" />
      </svg>
    </TrayCell>
    <div className="ml-[13px] w-px bg-[#555]" />
  </div>
);

export default function App() {
  return (
    <div className="flex h-[1080px] w-[1920px] overflow-hidden bg-black font-['Open_Sans',sans-serif]">
      <div className="ml-[150px] flex h-full w-[1620px] flex-col">
        <TitleBar />
        <TabRow />
        <Ribbon />
        <FormulaBar />
        <Sheet />
        <SheetTabs />
        <StatusBar />
        <Taskbar />
      </div>
    </div>
  );
}
